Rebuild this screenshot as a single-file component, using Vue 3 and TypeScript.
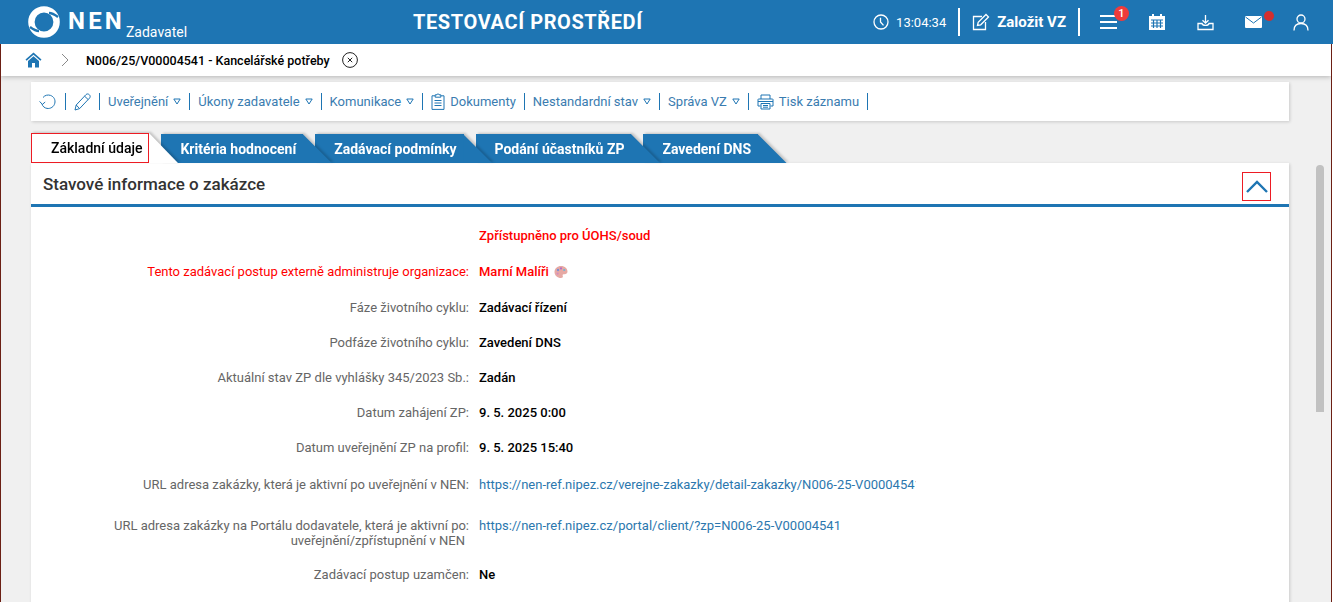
<script setup lang="ts">
const menu = [
  { key: "refresh", type: "refresh" },
  { key: "edit", type: "pencil" },
  { key: "pub", label: "Uveřejnění", caret: true },
  { key: "acts", label: "Úkony zadavatele", caret: true },
  { key: "comm", label: "Komunikace", caret: true },
  { key: "docs", label: "Dokumenty", type: "clipboard" },
  { key: "nonstd", label: "Nestandardní stav", caret: true },
  { key: "admin", label: "Správa VZ", caret: true },
  { key: "print", label: "Tisk záznamu", type: "printer" },
];

const tabs = ["Základní údaje", "Kritéria hodnocení", "Zadávací podmínky", "Podání účastníků ZP", "Zavedení DNS"];

type Row = { label: string; label2?: string; value: string; kind?: "red" | "link"; red?: boolean; palette?: boolean; h: number };

const rows: Row[] = [
  { label: "", value: "Zpřístupněno pro ÚOHS/soud", kind: "red", h: 36 },
  { label: "Tento zadávací postup externě administruje organizace:", value: "Marní Malíři", kind: "red", red: true, palette: true, h: 36 },
  { label: "Fáze životního cyklu:", value: "Zadávací řízení", h: 35 },
  { label: "Podfáze životního cyklu:", value: "Zavedení DNS", h: 35 },
  { label: "Aktuální stav ZP dle vyhlášky 345/2023 Sb.:", value: "Zadán", h: 35 },
  { label: "Datum zahájení ZP:", value: "9. 5. 2025 0:00", h: 35 },
  { label: "Datum uveřejnění ZP na profil:", value: "9. 5. 2025 15:40", h: 37 },
  { label: "URL adresa zakázky, která je aktivní po uveřejnění v NEN:", value: "https://nen-ref.nipez.cz/verejne-zakazky/detail-zakazky/N006-25-V00004541", kind: "link", h: 41 },
  { label: "URL adresa zakázky na Portálu dodavatele, která je aktivní po:", label2: "uveřejnění/zpřístupnění v NEN", value: "https://nen-ref.nipez.cz/portal/client/?zp=N006-25-V00004541", kind: "link", h: 49 },
  { label: "Zadávací postup uzamčen:", value: "Ne", h: 35 },
];
</script>

<template>
  <div class="app-root">
    <header class="topbar">
      <div class="brand">
        <svg class="logo" width="34" height="34" viewBox="0 0 34 34">
          <circle cx="17" cy="17" r="12.6" fill="none" stroke="#fff" stroke-width="6.4" />
          <path d="M3 22 C7 25 9 26 12 26" fill="none" stroke="#1e75b3" stroke-width="2.4" />
          <path d="M31 12 C27 9 25 8 22 8" fill="none" stroke="#1e75b3" stroke-width="2.4" />
        </svg>
        <span class="nen">NEN</span>
        <span class="role">Zadavatel</span>
      </div>
      <div class="env">TESTOVACÍ PROSTŘEDÍ</div>
      <div class="tools">
        <svg class="ico" width="16" height="16" viewBox="0 0 16 16" fill="none" stroke="#fff" stroke-width="1.3">
          <circle cx="8" cy="8" r="7" /><path d="M7.5 3.8 V8 L10.5 11.4" />
        </svg>
        <span class="clock">13:04:34</span>
        <i class="bar" />
        <svg class="ico" width="18" height="18" viewBox="0 0 18 18" fill="none" stroke="#fff" stroke-width="1.3">
          <path d="M10 3.5 H1.5 V16.5 H13.5 V9" /><path d="M5.5 12.5 L6.2 9.3 L14 1.5 L16.5 4 L8.7 11.8 Z" />
        </svg>
        <span class="create">Založit VZ</span>
        <i class="bar" />
        <span class="hamb">
          <svg width="17" height="14" viewBox="0 0 17 14" fill="#fff"><rect y="0" width="17" height="2" /><rect y="6" width="17" height="2" /><rect y="12" width="17" height="2" /></svg>
          <b class="badge">1</b>
        </span>
        <svg class="cal" width="18" height="18" viewBox="0 0 18 18">
          <path d="M1 3 H17 V17 H1 Z" fill="#fff" />
          <rect x="4" y="1" width="2" height="3.5" fill="#fff" /><rect x="12" y="1" width="2" height="3.5" fill="#fff" />
          <path d="M3 7 H15 M3 10 H15 M3 13 H15 M5.5 7 V15 M9 7 V15 M12.5 7 V15" stroke="#1e75b3" stroke-width="1.2" />
        </svg>
        <svg class="inbox" width="17" height="17" viewBox="0 0 17 17" fill="none" stroke="#fff" stroke-width="1.3">
          <path d="M8.5 1 V9 M5.5 6.2 L8.5 9.2 L11.5 6.2" />
          <path d="M5 9.5 H1 V15.5 H16 V9.5 H12 C11.5 12 5.5 12 5 9.5 Z" />
        </svg>
        <span class="mail">
          <svg width="17" height="12" viewBox="0 0 17 12"><rect width="17" height="12" rx="1" fill="#fff" /><path d="M0.5 1 L8.5 7 L16.5 1" fill="none" stroke="#1e75b3" stroke-width="1" /></svg>
          <b class="dot" />
        </span>
        <svg class="user" width="16" height="17" viewBox="0 0 16 17" fill="none" stroke="#fff" stroke-width="1.3">
          <circle cx="8" cy="5" r="4" /><path d="M1 16.5 C1 11.5 4 9.5 8 9.5 C12 9.5 15 11.5 15 16.5" />
        </svg>
      </div>
    </header>

    <main class="main">
      <nav class="crumbs">
        <svg class="home" width="17" height="16" viewBox="0 0 17 16">
          <path d="M8.5 0.5 L0.5 7.5 L1.6 8.8 L8.5 2.8 L15.4 8.8 L16.5 7.5 Z" fill="#1e75b3" />
          <path d="M3 9 L8.5 4.3 L14 9 V15.5 H10 V11 H7 V15.5 H3 Z" fill="#1e75b3" />
        </svg>
        <svg class="chev" width="8" height="14" viewBox="0 0 8 14" fill="none" stroke="#8a8a8a" stroke-width="1"><path d="M1 1 L7 7 L1 13" /></svg>
        <span class="crumb">N006/25/V00004541 - Kancelářské potřeby</span>
        <svg class="close" width="16" height="16" viewBox="0 0 16 16" fill="none" stroke="#222" stroke-width="1">
          <circle cx="8" cy="8" r="7.4" /><path d="M5.8 5.8 L10.2 10.2 M10.2 5.8 L5.8 10.2" />
        </svg>
      </nav>

      <div class="toolbar">
        <template v-for="m in menu" :key="m.key">
          <div class="tool">
            <svg v-if="m.type === 'refresh'" width="18" height="16" viewBox="0 0 18 16" fill="none" stroke="#1e75b3" stroke-width="1">
              <path d="M4 3.5 C6 1 9 0.6 11.5 1.4 C15 2.6 16.6 6 15.8 9.2 C15 12.8 11.4 15 8 14.4 C5.6 14 3.6 12.4 3 10" />
              <path d="M0.6 7.4 L3.4 10.4 L6.2 8" />
            </svg>
            <svg v-if="m.type === 'pencil'" width="17" height="18" viewBox="0 0 17 18" fill="none" stroke="#1e75b3" stroke-width="1">
              <path d="M1 17 L2.2 12 L12 1.6 C13 0.6 14.4 0.8 15.4 1.8 C16.4 2.8 16.4 4 15.6 5 L5.6 15.6 Z" />
              <path d="M2.2 12 L5.6 15.6 M10.6 3.2 L14.2 6.6" />
            </svg>
            <svg v-if="m.type === 'clipboard'" class="lead" width="14" height="17" viewBox="0 0 14 17" fill="none" stroke="#1e75b3" stroke-width="1">
              <path d="M4 2.8 H1 V16.4 H13 V2.8 H10" />
              <path d="M4.2 4.2 V1.8 H6 C6.2 0.4 7.8 0.4 8 1.8 H9.8 V4.2 Z" />
              <path d="M3.5 7.5 H10.5 M3.5 10 H10.5 M3.5 12.5 H10.5" />
            </svg>
            <svg v-if="m.type === 'printer'" class="lead" width="17" height="16" viewBox="0 0 17 16" fill="none" stroke="#1e75b3" stroke-width="1">
              <path d="M4 5 V1 H13 V5" />
              <path d="M3.5 12 H1 V5.5 C1 5 1.4 5 2 5 H15 C15.6 5 16 5 16 5.5 V12 H13.5" />
              <path d="M4 9.5 H13 V15 H4 Z" />
              <path d="M1 7.5 H16 M6 11.5 H11 M6 13.2 H11" />
            </svg>
            <span v-if="m.label" class="tool-label">{{ m.label }}</span>
            <svg v-if="m.caret" class="caret" width="8" height="7" viewBox="0 0 8 7" fill="none" stroke="#1e75b3" stroke-width="1"><path d="M0.8 1 H7.2 L4 6 Z" /></svg>
          </div>
          <i class="tool-sep" />
        </template>
      </div>

      <div class="tabs">
        <div
          v-for="(t, i) in tabs"
          :key="t"
          class="tab"
          :class="{ active: i === 0 }"
          :style="{ zIndex: 10 - i }"
        >{{ t }}</div>
      </div>

      <section class="card">
        <div class="card-head">
          <h2>Stavové informace o zakázce</h2>
          <button class="collapse" type="button">
            <svg width="22" height="13" viewBox="0 0 22 13" fill="none" stroke="#1e75b3" stroke-width="2.4"><path d="M1 12 L11 2 L21 12" /></svg>
          </button>
        </div>
        <div class="rows">
          <div v-for="r in rows" :key="r.value" class="row" :style="{ height: r.h + 'px' }">
            <div class="lbl" :class="{ red: r.red }">
              {{ r.label }}<span v-if="r.label2" class="lbl2">{{ r.label2 }}</span>
            </div>
            <div class="val" :class="r.kind">
              {{ r.value }}
              <svg v-if="r.palette" class="palette" width="14" height="14" viewBox="0 0 14 14">
                <path d="M7 1 C11 1 13.5 3.6 13.5 6.6 C13.5 9 11.5 9.4 10 9.2 C8.6 9 8.4 10 8.8 11 C9.2 12.2 8.4 13 7 13 C3.4 13 0.5 10.4 0.5 7 C0.5 3.6 3.4 1 7 1 Z" fill="#e6a9a4" />
                <circle cx="4" cy="5" r="1.2" fill="#7d8fd0" /><circle cx="7" cy="3.4" r="1.1" fill="#b56fc4" /><circle cx="10.2" cy="5" r="1.1" fill="#6fb5d6" /><circle cx="3.6" cy="8.6" r="1.1" fill="#d68ac0" />
              </svg>
            </div>
          </div>
        </div>
      </section>
      <div class="scroll-thumb" />
    </main>
  </div>
</template>

<style>
html, body {
  margin: 0;
  overflow: hidden;
}
</style>

<style scoped>
.app-root {
  height: 602px;
  display: flex;
  flex-direction: column;
  overflow: hidden;
  font-family: Roboto, "Liberation Sans", sans-serif;
  font-size: 13px;
  color: #000;
}

.topbar {
  height: 44px;
  flex: none;
  background: #1e75b3;
  color: #fff;
  display: flex;
  align-items: center;
  position: relative;
}

.brand {
  width: 400px;
  padding-left: 27px;
  box-sizing: border-box;
  display: flex;
  align-items: center;
  flex: none;
}

.logo {
  flex: none;
}

.nen {
  font-size: 24px;
  font-weight: 700;
  letter-spacing: 3.2px;
  margin-left: 7px;
  margin-top: -3px;
}

.role {
  font-size: 14px;
  margin-left: 1px;
  margin-top: 19px;
}

.env {
  font-size: 20px;
  font-weight: 700;
  letter-spacing: 0.6px;
  margin-left: 13px;
  white-space: nowrap;
}

.tools {
  margin-left: auto;
  display: flex;
  align-items: center;
  padding-right: 24px;
}

.clock {
  font-size: 13px;
  margin-left: 7px;
  margin-right: 12px;
}

.bar {
  width: 2px;
  height: 28px;
  background: #fff;
  display: block;
}

.create {
  font-size: 15px;
  font-weight: 700;
  margin: 0 12px 0 7px;
}

.tools > .bar + .ico {
  margin-left: 12px;
}

.hamb {
  position: relative;
  display: flex;
  margin-left: 20px;
}

.badge {
  position: absolute;
  left: 14px;
  top: -9px;
  width: 15px;
  height: 15px;
  border-radius: 50%;
  background: #ef3b3b;
  font-size: 11px;
  font-weight: 500;
  line-height: 15px;
  text-align: center;
}

.cal {
  margin-left: 31px;
}

.inbox {
  margin-left: 31px;
}

.mail {
  position: relative;
  display: flex;
  margin-left: 31px;
}

.dot {
  position: absolute;
  left: 19px;
  top: -5px;
  width: 10px;
  height: 10px;
  border-radius: 50%;
  background: #d32f2f;
}

.user {
  margin-left: 31px;
}

.main {
  flex: 1;
  min-height: 0;
  position: relative;
  background: #f0f0f0;
  border-left: 1px solid #6b1f14;
  border-right: 1px solid #6b1f14;
  margin-right: 1px;
  overflow: hidden;
}

.crumbs {
  height: 32px;
  background: #fff;
  box-shadow: 0 1px 5px rgba(0, 0, 0, 0.25);
  display: flex;
  align-items: center;
  padding-left: 24px;
}

.chev {
  margin-left: 19px;
}

.crumb {
  font-size: 12.5px;
  font-weight: 500;
  margin-left: 17px;
  white-space: nowrap;
}

.close {
  margin-left: 12px;
}

.toolbar {
  width: 1258px;
  height: 39px;
  margin: 6px 0 0 30px;
  box-sizing: border-box;
  background: #fff;
  box-shadow: 1px 1px 3px rgba(0, 0, 0, 0.16);
  display: flex;
  align-items: center;
  padding-left: 0;
}

.tool {
  display: flex;
  align-items: center;
  padding: 0 8px;
  height: 100%;
  color: #2b77ae;
  font-size: 13px;
  white-space: nowrap;
}

.tool-label {
  color: #3a7cb0;
}

.lead {
  margin-right: 5px;
}

.caret {
  margin-left: 5px;
}

.tool-sep {
  width: 1px;
  height: 17px;
  background: #1e75b3;
  display: block;
  flex: none;
}

.tabs {
  display: flex;
  margin: 12px 0 0 30px;
  height: 30px;
}

.tab {
  position: relative;
  height: 29px;
  margin-top: 1px;
  line-height: 30px;
  padding: 0 7px 0 19px;
  margin-right: 12px;
  background: #1e75b3;
  color: #fff;
  font-size: 14px;
  font-weight: 700;
  white-space: nowrap;
  filter: drop-shadow(2px -1px 1px rgba(0, 0, 0, 0.18));
}

.tab::after {
  content: "";
  position: absolute;
  left: 100%;
  top: 0;
  width: 29px;
  height: 100%;
  margin-left: -0.5px;
  background: inherit;
  clip-path: polygon(0 0, 100% 100%, 0 100%);
}

.tab.active {
  background: #fff;
  color: #000;
  height: 30px;
  margin-top: 0;
  outline: 1px solid #ed1c24;
  outline-offset: -1px;
  padding-left: 20px;
  padding-right: 7px;
  margin-right: 12px;
  font-weight: 500;
}

.card {
  width: 1258px;
  margin-left: 30px;
  background: #fff;
  box-shadow: 1px 1px 3px rgba(0, 0, 0, 0.16);
  padding-bottom: 40px;
}

.card-head {
  height: 41px;
  border-bottom: 3px solid #1e75b3;
  display: flex;
  align-items: center;
  justify-content: space-between;
  padding: 0 18px 0 12px;
}

.card-head h2 {
  margin: 0;
  font-size: 17px;
  font-weight: 500;
  color: #333;
}

.collapse {
  width: 29px;
  height: 29px;
  margin-top: 5px;
  padding: 0;
  background: #fff;
  border: 1px solid #ed1c24;
  display: flex;
  align-items: center;
  justify-content: center;
}

.rows {
  padding-top: 21px;
}

.row {
  display: grid;
  grid-template-columns: 438px 437px;
  column-gap: 10px;
  align-items: start;
  line-height: 15px;
}

.lbl {
  text-align: right;
  color: #666;
  font-size: 13px;
}

.lbl.red {
  color: #f00;
}

.lbl2 {
  display: block;
  padding-right: 4px;
}

.val {
  font-weight: 500;
  font-size: 13px;
  white-space: nowrap;
  overflow: hidden;
  display: flex;
  align-items: center;
}

.val.red {
  color: #f00;
}

.val.link {
  font-weight: 400;
  color: #2b77ae;
}

.palette {
  margin-left: 5px;
}

.scroll-thumb {
  position: absolute;
  left: 1315px;
  top: 121px;
  width: 8px;
  height: 247px;
  border-radius: 4px 4px 0 0;
  background: #c1c1c1;
}
</style>
